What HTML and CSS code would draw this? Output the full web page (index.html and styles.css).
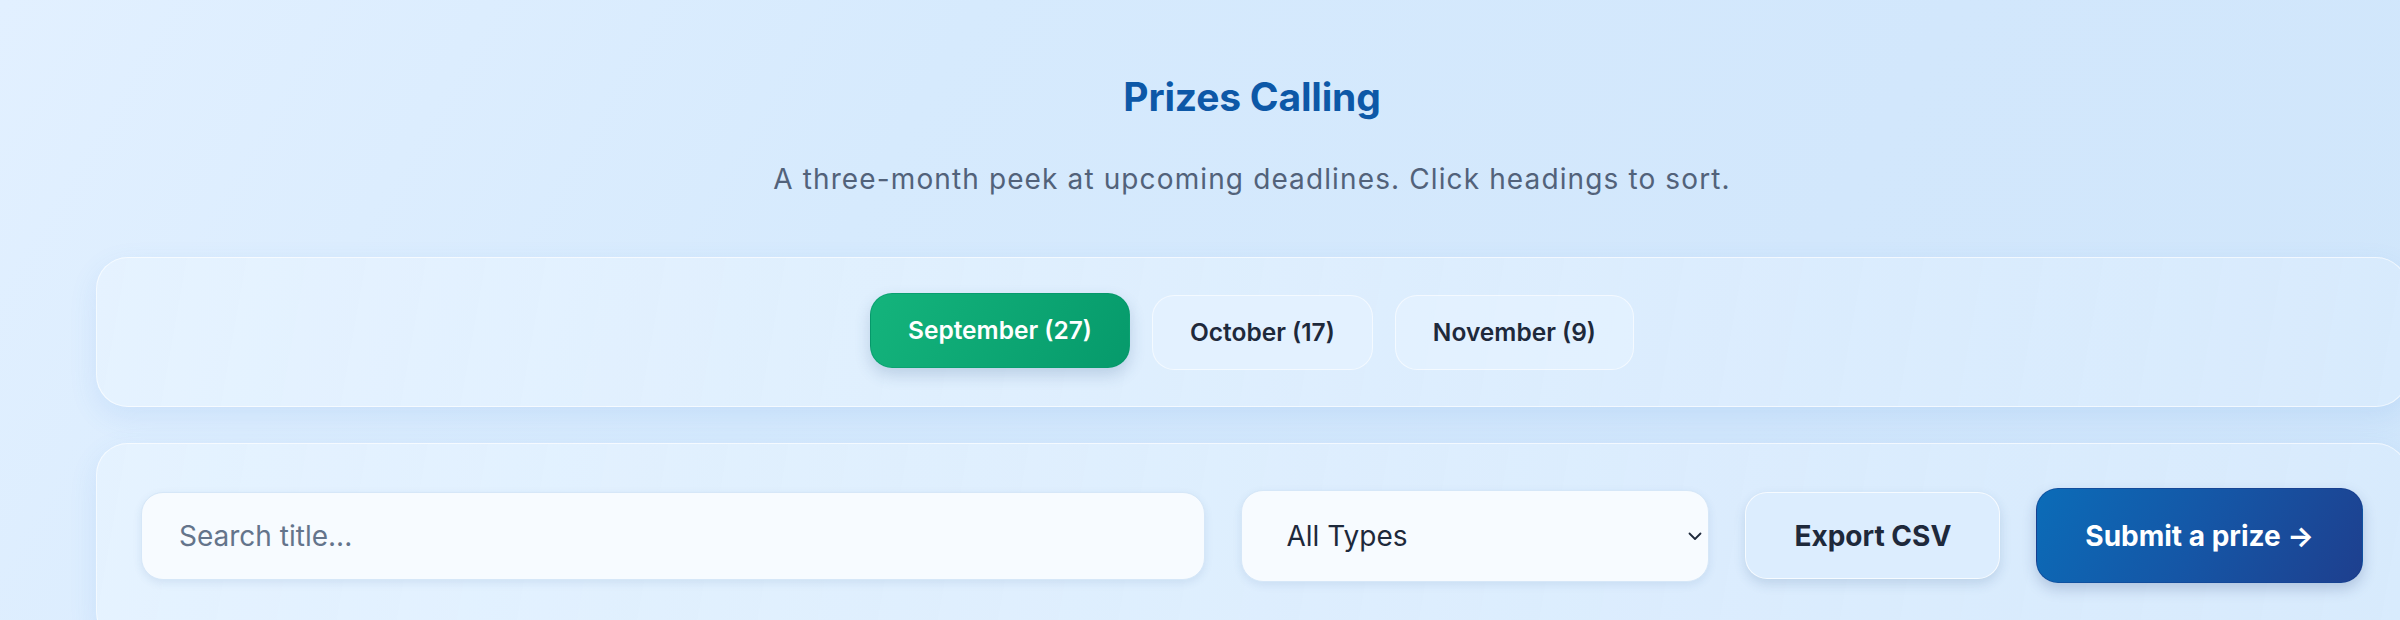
FILE: index.html
```html
<!DOCTYPE html>
<html lang="en">
<head>
<meta charset="utf-8">
<title>Prizes Calling</title>
<link rel="stylesheet" href="styles.css">
</head>
<body>
<main class="page">
  <header class="hero">
    <h1 class="title">Prizes Calling</h1>
    <p class="subtitle">A three-month peek at upcoming deadlines. Click headings to sort.</p>
  </header>

  <section class="panel tabs-panel">
    <div class="tabs">
      <button class="tab tab-active" type="button">September (27)</button>
      <button class="tab" type="button">October (17)</button>
      <button class="tab" type="button">November (9)</button>
    </div>
  </section>

  <section class="panel controls-panel">
    <div class="controls">
      <input class="search" type="text" placeholder="Search title...">
      <div class="select-wrap">
        <select class="select">
          <option>All Types</option>
        </select>
        <svg class="chevron" width="14" height="9" viewBox="0 0 14 9" aria-hidden="true"><path d="M1.5 1.5 L7 7 L12.5 1.5" fill="none" stroke="#1e293b" stroke-width="1.8" stroke-linecap="round" stroke-linejoin="round"/></svg>
      </div>
      <button class="btn btn-export" type="button">Export CSV</button>
      <button class="btn btn-submit" type="button">Submit a prize →</button>
    </div>
  </section>
</main>
</body>
</html>
```

FILE: styles.css
```css
html, body {
  margin: 0;
  padding: 0;
  overflow: hidden;
}

body {
  font-family: Inter, "Noto Sans", "Liberation Sans", sans-serif;
  background: linear-gradient(120deg, #e2f0ff 0%, #d6eafd 35%, #d2e7fc 70%, #d0e6fb 100%);
  min-height: 620px;
  color: #1e293b;
}

.page {
  width: 2504px;
  box-sizing: border-box;
  padding: 73px 96px 40px;
}

.hero {
  text-align: center;
}

.title {
  margin: 0;
  font-size: 39px;
  font-weight: 700;
  color: #0d58a7;
  letter-spacing: -0.005em;
}

.subtitle {
  margin: 42px 0 0;
  font-size: 28px;
  font-weight: 400;
  color: #52627a;
  letter-spacing: 0.04em;
}

.panel {
  background: linear-gradient(100deg, rgba(232, 244, 255, 0.7) 0%, rgba(222, 238, 254, 0.55) 100%);
  border: 1px solid rgba(255, 255, 255, 0.65);
  border-radius: 32px;
  box-shadow: 0 10px 28px rgba(70, 140, 220, 0.12);
}

.tabs-panel {
  margin-top: 61px;
  padding: 37px 40px 36px;
}

.tabs {
  display: flex;
  justify-content: center;
  gap: 22px;
}

.tab {
  font-family: inherit;
  font-size: 24.5px;
  font-weight: 600;
  line-height: 31px;
  padding: 21px 37px;
  border-radius: 22px;
  border: 1px solid rgba(255, 255, 255, 0.6);
  background: rgba(228, 241, 255, 0.75);
  color: #1e293b;
  cursor: pointer;
}

.tab-active {
  background: linear-gradient(120deg, #14b47c 0%, #069a6b 100%);
  border-color: rgba(6, 150, 105, 0.55);
  color: #ffffff;
  transform: translateY(-2px);
  box-shadow: 0 7px 16px rgba(40, 80, 130, 0.2);
}

.controls-panel {
  margin-top: 36px;
  padding: 44px 44px 60px;
}

.controls {
  display: flex;
  align-items: center;
  gap: 36px;
}

.search {
  flex: 1;
  min-width: 0;
  height: 88px;
  box-sizing: border-box;
  padding: 0 37px;
  font-family: inherit;
  font-size: 28px;
  color: #1e293b;
  background: #f7fbff;
  border: 1px solid #d6e7f8;
  border-radius: 22px;
  box-shadow: 0 3px 8px rgba(40, 90, 150, 0.1);
  outline: none;
}

.search::placeholder {
  color: #64748b;
}

.select-wrap {
  position: relative;
  width: 468px;
  flex: none;
}

.select {
  display: block;
  width: 100%;
  height: 92px;
  box-sizing: border-box;
  padding: 0 44px;
  font-family: inherit;
  font-size: 28px;
  color: #1e293b;
  background: #f7fbff;
  border: 1px solid #d6e7f8;
  border-radius: 22px;
  box-shadow: 0 3px 8px rgba(40, 90, 150, 0.1);
  appearance: none;
  -webkit-appearance: none;
  outline: none;
}

.chevron {
  position: absolute;
  right: 7px;
  top: 42px;
  pointer-events: none;
}

.btn {
  flex: none;
  font-family: inherit;
  font-size: 28px;
  font-weight: 700;
  line-height: 34px;
  border-radius: 22px;
  cursor: pointer;
  white-space: nowrap;
}

.btn-export {
  height: 87px;
  padding: 0 48px;
  color: #1e293b;
  background: #dcedfe;
  border: 1px solid rgba(255, 255, 255, 0.75);
  box-shadow: 0 5px 12px rgba(40, 80, 130, 0.16);
}

.btn-submit {
  height: 95px;
  padding: 0 48px;
  color: #ffffff;
  background: linear-gradient(120deg, #0b6cb8 0%, #1556a6 50%, #1e3f8e 100%);
  border: 1px solid rgba(20, 60, 140, 0.5);
  box-shadow: 0 6px 14px rgba(30, 60, 120, 0.22);
}
```
